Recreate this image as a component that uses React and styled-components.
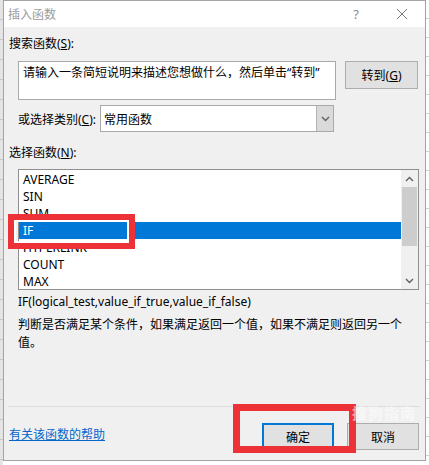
import styled, { createGlobalStyle } from "styled-components";

const GlobalStyle = createGlobalStyle`
  html, body { margin: 0; padding: 0; }
  body {
    font-family: "Noto Sans", "Noto Sans CJK SC", sans-serif;
    font-size: 12px;
    color: #000;
    background: #fff;
  }
`;

const Screen = styled.div`
  position: relative;
  display: flex;
  width: 429px;
  height: 465px;
  overflow: hidden;
  background: #fff;
`;

const LeftSheet = styled.div`
  width: 3px;
  background: repeating-linear-gradient(to bottom, #e4e4e4 0 19px, #c8c8c8 19px 20px);
`;

const RightSheet = styled.div`
  flex: 1;
  background: repeating-linear-gradient(to bottom, #fff 0 18px, #d0d0d0 18px 19px);
`;

const Dialog = styled.div`
  width: 421px;
  height: 459px;
  border: 1px solid #a3a3a3;
  background: #f0f0f0;
  display: flex;
  flex-direction: column;
`;

const TitleBar = styled.div`
  height: 26px;
  background: #fff;
  display: flex;
  align-items: center;
  padding-left: 4px;
  color: #9b9b9b;
`;

const Title = styled.span`
  flex: 1;
`;

const TitleBtn = styled.span`
  width: 46px;
  display: flex;
  justify-content: center;
  align-items: center;
  color: #8a8a8a;
  font-size: 13px;
`;

const Body = styled.div`
  flex: 1;
  display: flex;
  flex-direction: column;
  padding: 0 5px;
`;

const Label = styled.div`
  line-height: 16px;
  margin-top: ${(p) => p.$top}px;
  margin-left: ${(p) => p.$indent || 0}px;
  white-space: nowrap;
`;

const Row = styled.div`
  display: flex;
  align-items: ${(p) => p.$align || "flex-start"};
  margin-top: ${(p) => p.$top}px;
  margin-left: 9px;
  gap: ${(p) => p.$gap || 0}px;
`;

const SearchBox = styled.div`
  box-sizing: border-box;
  width: 318px;
  height: 39px;
  background: #fff;
  border: 1px solid #a9a9a9;
  padding: 3px 4px;
  line-height: 16px;
  white-space: nowrap;
  overflow: hidden;
`;

const Button = styled.div`
  box-sizing: border-box;
  width: ${(p) => p.$w || 73}px;
  height: ${(p) => p.$h || 28}px;
  background: #e1e1e1;
  border: 1px solid ${(p) => (p.$primary ? "#0078d7" : "#adadad")};
  box-shadow: ${(p) => (p.$primary ? "inset 0 0 0 1px #0078d7" : "none")};
  display: flex;
  align-items: center;
  justify-content: center;
  white-space: nowrap;
`;

const CatLabel = styled.span`
  width: 82px;
  white-space: nowrap;
`;

const Select = styled.div`
  box-sizing: border-box;
  width: 234px;
  height: 27px;
  background: #fff;
  border: 1px solid #a9a9a9;
  display: flex;
  align-items: stretch;
`;

const SelectValue = styled.span`
  flex: 1;
  padding-left: 3px;
  display: flex;
  align-items: center;
`;

const DropBtn = styled.span`
  width: 16px;
  background: #dadada;
  border-left: 1px solid #b4b4b4;
  display: flex;
  align-items: center;
  justify-content: center;
`;

const ListBox = styled.div`
  box-sizing: border-box;
  width: 401px;
  height: 121px;
  margin-top: 8px;
  margin-left: 9px;
  background: #fff;
  border: 1px solid #8f8f8f;
  display: flex;
`;

const Items = styled.div`
  flex: 1;
  padding-top: 1px;
  overflow: hidden;
`;

const Item = styled.div`
  height: 17px;
  line-height: 17px;
  padding-left: 4px;
  background: ${(p) => (p.$selected ? "#0078d7" : "transparent")};
  color: ${(p) => (p.$selected ? "#fff" : "#000")};
`;

const ScrollBar = styled.div`
  width: 17px;
  background: #f0f0f0;
  display: flex;
  flex-direction: column;
`;

const ScrollArrow = styled.div`
  height: 17px;
  display: flex;
  align-items: center;
  justify-content: center;
`;

const ScrollTrack = styled.div`
  flex: 1;
  padding: 0 1px;
`;

const Thumb = styled.div`
  height: 59px;
  background: #cdcdcd;
`;

const Desc = styled.div`
  margin-top: 6px;
  margin-left: 9px;
  width: 392px;
  line-height: 18px;
`;

const Separator = styled.div`
  margin-top: auto;
  margin-left: -1px;
  margin-right: 0;
  height: 1px;
  background: #dcdcdc;
`;

const Footer = styled.div`
  display: flex;
  align-items: center;
  margin-top: 16px;
  margin-bottom: 10px;
  margin-right: 1px;
`;

const HelpLink = styled.a`
  flex: 1;
  color: #0066cc;
  text-decoration: underline;
  line-height: 16px;
  margin-top: -3px;
`;

const ButtonGroup = styled.div`
  display: flex;
  gap: 13px;
`;

const RedBox = styled.div`
  position: absolute;
  box-sizing: border-box;
  left: ${(p) => p.$x}px;
  top: ${(p) => p.$y}px;
  width: ${(p) => p.$w}px;
  height: ${(p) => p.$h}px;
  border: ${(p) => p.$t}px solid #ec3237;
  box-shadow: ${(p) => (p.$inner ? "inset 0 0 0 2px #fff" : "none")};
`;

const Watermark = styled.span`
  position: absolute;
  left: 352px;
  top: 402px;
  color: rgba(255, 255, 255, 0.55);
  font-size: 15px;
  font-weight: bold;
  letter-spacing: 1px;
`;

const U = styled.span`
  text-decoration: underline;
`;

function Chevron({ up }) {
  return (
    <svg width="9" height="6" viewBox="0 0 9 6">
      <polyline
        points={up ? "1,5 4.5,1.5 8,5" : "1,1 4.5,4.5 8,1"}
        fill="none"
        stroke="#606060"
        strokeWidth="1.4"
      />
    </svg>
  );
}

const functions = ["AVERAGE", "SIN", "SUM", "IF", "HYPERLINK", "COUNT", "MAX"];

export default function App() {
  return (
    <>
      <GlobalStyle />
      <Screen>
        <LeftSheet />
        <Dialog>
          <TitleBar>
            <Title>插入函数</Title>
            <TitleBtn>?</TitleBtn>
            <TitleBtn>
              <svg width="12" height="12" viewBox="0 0 12 12">
                <path d="M1 1 L11 11 M11 1 L1 11" stroke="#7a7a7a" strokeWidth="1" />
              </svg>
            </TitleBtn>
          </TitleBar>
          <Body>
            <Label $top={9}>
              搜索函数(<U>S</U>):
            </Label>
            <Row $top={9} $gap={9}>
              <SearchBox>请输入一条简短说明来描述您想做什么，然后单击“转到”</SearchBox>
              <Button>
                转到(<U>G</U>)
              </Button>
            </Row>
            <Row $top={5} $align="center">
              <CatLabel>
                或选择类别(<U>C</U>):
              </CatLabel>
              <Select>
                <SelectValue>常用函数</SelectValue>
                <DropBtn>
                  <Chevron />
                </DropBtn>
              </Select>
            </Row>
            <Label $top={13}>
              选择函数(<U>N</U>):
            </Label>
            <ListBox>
              <Items>
                {functions.map((f) => (
                  <Item key={f} $selected={f === "IF"}>
                    {f}
                  </Item>
                ))}
              </Items>
              <ScrollBar>
                <ScrollArrow>
                  <Chevron up />
                </ScrollArrow>
                <ScrollTrack>
                  <Thumb />
                </ScrollTrack>
                <ScrollArrow>
                  <Chevron />
                </ScrollArrow>
              </ScrollBar>
            </ListBox>
            <Label $top={4} $indent={9}>
              IF(logical_test,value_if_true,value_if_false)
            </Label>
            <Desc>判断是否满足某个条件，如果满足返回一个值，如果不满足则返回另一个值。</Desc>
            <Separator />
            <Footer>
              <HelpLink>有关该函数的帮助</HelpLink>
              <ButtonGroup>
                <Button $w={72} $h={27} $primary>
                  确定
                </Button>
                <Button $w={72} $h={27}>
                  取消
                </Button>
              </ButtonGroup>
            </Footer>
          </Body>
        </Dialog>
        <RightSheet />
        <RedBox $x={8} $y={214} $w={127} $h={35} $t={6} $inner />
        <RedBox $x={233} $y={404} $w={123} $h={49} $t={7} />
        <Watermark>搜狗指南</Watermark>
      </Screen>
    </>
  );
}
